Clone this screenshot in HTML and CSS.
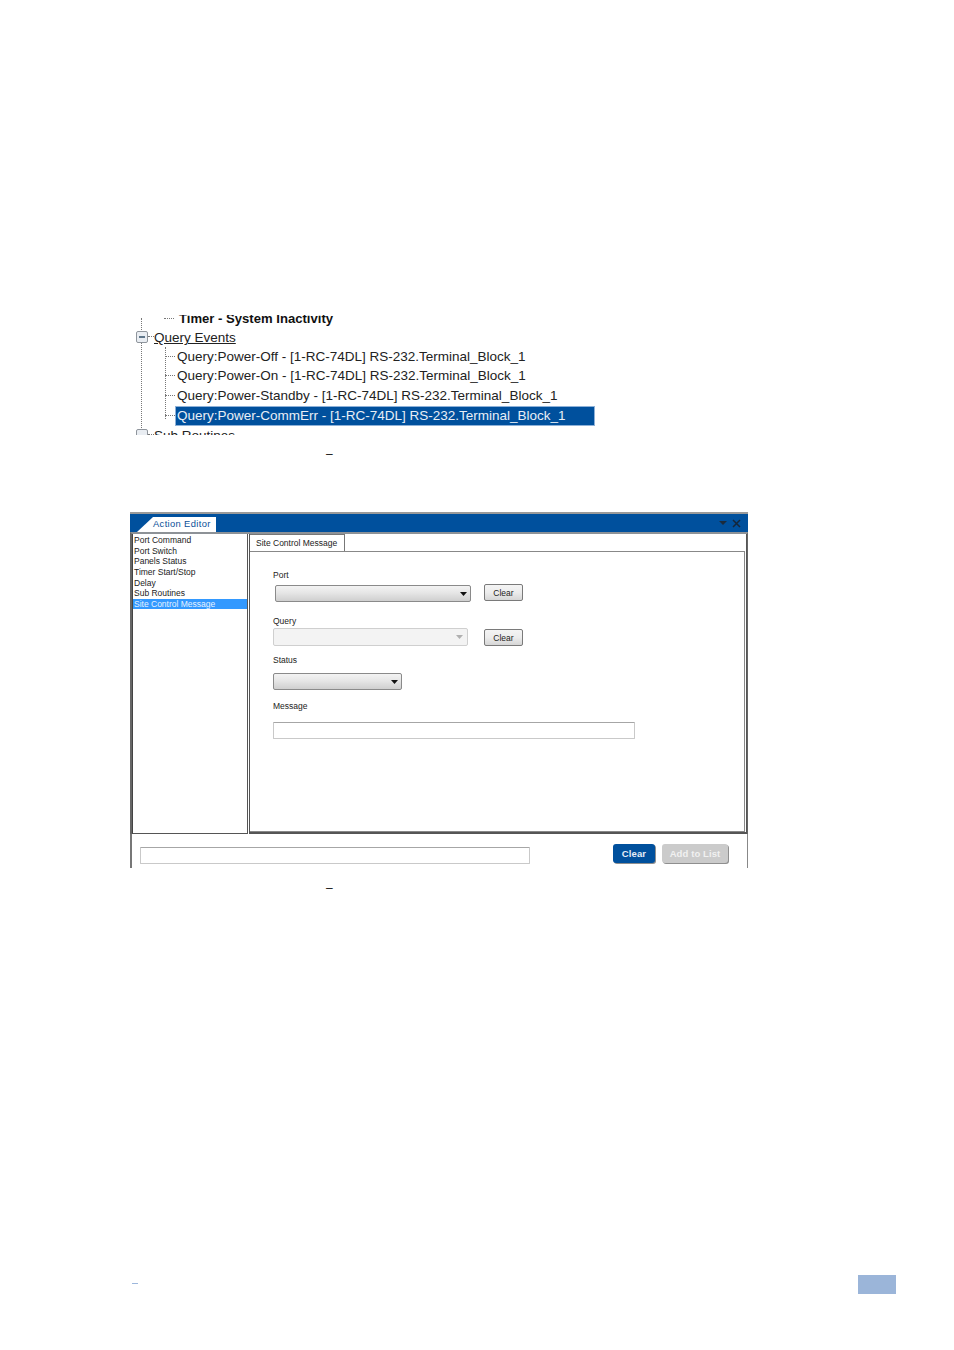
FILE: index.html
```html
<!DOCTYPE html>
<html lang="en">
<head>
<meta charset="utf-8">
<title>Action Editor</title>
<link rel="stylesheet" href="styles.css">
</head>
<body>
<div class="page">
  <section class="tree">
    <div class="tree-clip">
      <div class="root-line"></div>
      <div class="row row-timer"><span class="stub"></span><span class="timer">Timer - System Inactivity</span></div>
      <div class="row row-group">
        <svg class="expander" width="12" height="12" viewBox="0 0 12 12"><rect x="0.5" y="0.5" width="11" height="11" rx="1.5" fill="#e9edf2" stroke="#8f959c"/><path d="M3 6h6" stroke="#26445f" stroke-width="1.4"/></svg>
        <span class="stub-short"></span>
        <span class="group">Query Events</span>
      </div>
      <div class="children">
        <div class="row"><span class="stub"></span><span class="item">Query:Power-Off - [1-RC-74DL] RS-232.Terminal_Block_1</span></div>
        <div class="row"><span class="stub"></span><span class="item">Query:Power-On - [1-RC-74DL] RS-232.Terminal_Block_1</span></div>
        <div class="row"><span class="stub"></span><span class="item">Query:Power-Standby - [1-RC-74DL] RS-232.Terminal_Block_1</span></div>
        <div class="row"><span class="stub"></span><span class="item selected">Query:Power-CommErr - [1-RC-74DL] RS-232.Terminal_Block_1</span></div>
      </div>
      <div class="row row-sub">
        <svg class="expander" width="12" height="12" viewBox="0 0 12 12"><rect x="0.5" y="0.5" width="11" height="11" rx="1.5" fill="#e9edf2" stroke="#8f959c"/></svg>
        <span class="stub-short"></span>
        <span class="sub">Sub Routines</span>
      </div>
    </div>
  </section>

  <div class="caption caption-one">–</div>

  <section class="window">
    <header class="titlebar">
      <div class="title-tab">Action Editor</div>
      <div class="title-tools">
        <svg width="8" height="4" viewBox="0 0 8 4"><path d="M0 0h8L4 4z" fill="#1b2b3d"/></svg>
        <svg width="9" height="9" viewBox="0 0 9 9"><path d="M1 1l7 7M8 1L1 8" stroke="#15263a" stroke-width="1.5" fill="none"/></svg>
      </div>
    </header>
    <div class="main">
      <ul class="action-list">
        <li>Port Command</li>
        <li>Port Switch</li>
        <li>Panels Status</li>
        <li>Timer Start/Stop</li>
        <li>Delay</li>
        <li>Sub Routines</li>
        <li class="active">Site Control Message</li>
      </ul>
      <div class="tab-panel">
        <div class="tab-strip"><div class="tab">Site Control Message</div></div>
        <div class="tab-body">
          <div class="label label-port">Port</div>
          <div class="control-row row-port">
            <div class="select select-port"><svg width="7" height="4" viewBox="0 0 7 4"><path d="M0 0h7L3.5 4z" fill="#111"/></svg></div>
            <button class="btn btn-port">Clear</button>
          </div>
          <div class="label label-query">Query</div>
          <div class="control-row row-query">
            <div class="select select-query"><svg width="7" height="4" viewBox="0 0 7 4"><path d="M0 0h7L3.5 4z" fill="#b0b0b0"/></svg></div>
            <button class="btn btn-query">Clear</button>
          </div>
          <div class="label label-status">Status</div>
          <div class="select select-status"><svg width="7" height="4" viewBox="0 0 7 4"><path d="M0 0h7L3.5 4z" fill="#111"/></svg></div>
          <div class="label label-message">Message</div>
          <div class="input input-message"></div>
        </div>
      </div>
    </div>
    <footer class="win-footer">
      <div class="input input-bottom"></div>
      <button class="action action-clear">Clear</button>
      <button class="action action-add">Add to List</button>
    </footer>
  </section>

  <div class="caption caption-two">–</div>

  <footer class="page-foot">
    <span class="foot-mark"></span>
    <span class="page-block"></span>
  </footer>
</div>
</body>
</html>
```

FILE: styles.css
```css
* { box-sizing: border-box; }
html, body { margin: 0; padding: 0; background: #fff; }
body { font-family: "Liberation Sans", Arial, sans-serif; }
.page { width: 954px; height: 1350px; padding-top: 315px; overflow: hidden; }

/* tree */
.tree { margin-left: 130px; width: 470px; }
.tree-clip { position: relative; height: 120px; overflow: hidden; }
.root-line { position: absolute; left: 11px; top: 3px; bottom: 3px; border-left: 1px dotted #777; }
.row { display: flex; align-items: center; height: 19.6px; font-size: 13.5px; color: #222; white-space: nowrap; }
.row-timer { height: 12px; padding-left: 34px; align-items: flex-start; }
.row-timer .stub { margin-right: 4px; margin-top: 3px; }
.timer { font-weight: 700; color: #111; font-size: 13.1px; line-height: 12px; margin-top: -2px; margin-left: 1px; }
.row-group { padding-left: 6px; }
.expander { flex: none; position: relative; }
.stub-short { width: 6px; border-top: 1px dotted #777; }
.group { text-decoration: underline; color: #222; position: relative; top: 1px; }
.children { position: relative; margin-left: 35px; padding-right: 5px; height: 78.4px; }
.children::before { content: ""; position: absolute; left: 0; top: 0; height: 72px; border-left: 1px dotted #777; }
.stub { width: 10px; flex: none; border-top: 1px dotted #777; }
.item { padding: 0 2px 0 2px; }
.selected { flex: 1; align-self: flex-start; height: 20px; margin-top: 1px; padding-bottom: 2px; display: flex; align-items: center; background: #00509d; color: #e8eef6; outline: 1px solid #8eb1d8; outline-offset: -1px; }
.row-sub { padding-left: 6px; }
.sub { color: #222; position: relative; top: 1px; }

.caption { margin-left: 326px; font-size: 12px; line-height: 10px; height: 10px; color: #111; }
.caption-one { margin-top: 14px; }
.caption-two { margin-top: 15px; }

/* window */
.window { margin-left: 130px; margin-top: 53px; width: 618px; height: 356px; border-top: 2px solid #9a9a9a; display: flex; flex-direction: column; font-size: 8.5px; color: #222; }
.titlebar { height: 18px; flex: none; background: #00509d; display: flex; align-items: flex-end; justify-content: space-between; padding: 0 7px 0 7px; }
.title-tab { width: 79px; height: 15px; background: #fff; color: #0a4f98; font-size: 9.4px; letter-spacing: 0.35px; line-height: 13px; padding-left: 16px; clip-path: polygon(0 100%, 16px 0, 100% 0, 100% 100%); }
.title-tools { display: flex; align-items: center; gap: 5px; height: 18px; }
.main { height: 302px; display: flex; border-top: 2px solid #8d9297; border-left: 2px solid #666; border-right: 1px solid #666; flex: none; }
.action-list { list-style: none; margin: 0; padding: 1px 0 0 0; width: 116px; flex: none; border-right: 1px solid #555; border-bottom: 1px solid #555; border-left: 1px solid #444; }
.action-list li { height: 10.7px; line-height: 11px; padding-left: 1px; white-space: nowrap; font-size: 8.5px; color: #222; }
.action-list .active { background: #3399ff; color: #e6f2ff; height: 10px; line-height: 10px; }
.tab-panel { flex: 1; margin-left: 1px; border: 1px solid #555; border-top: 0; border-bottom-width: 2px; display: flex; flex-direction: column; }
.tab-strip { height: 18px; flex: none; display: flex; }
.tab { width: 95px; height: 18px; background: #fff; border-right: 1px solid #777; border-top: 1px solid #777; padding-left: 6px; line-height: 17px; white-space: nowrap; font-size: 8.5px; }
.tab-body { flex: 1; margin: -1px 1px 0 0; border-top: 1px solid #888; border-right: 1px solid #888; border-bottom: 1px solid #888; padding-left: 23px; display: flex; flex-direction: column; align-items: flex-start; }
.label { height: 11px; line-height: 11px; white-space: nowrap; font-size: 8.5px; }
.label-port { margin-top: 18px; }
.label-query { margin-top: 14px; }
.label-status { margin-top: 9px; }
.label-message { margin-top: 11px; }
.control-row { display: flex; }
.row-port { margin-top: 4px; margin-left: 2px; }
.row-query { margin-top: 1px; }
.select { height: 17px; border: 1px solid #8a8a8a; border-radius: 2px; background: linear-gradient(#f3f3f3, #e6e6e6 45%, #cfcfcf); display: flex; align-items: center; justify-content: flex-end; padding-right: 3px; }
.select-port { width: 196px; }
.select-query { width: 195px; height: 18px; background: #f3f3f3; border-color: #cfcfcf; padding-right: 4px; }
.select-status { width: 129px; margin-top: 7px; }
.btn { width: 39px; height: 17px; margin-left: 13px; margin-top: -1px; padding: 0; border: 1px solid #7a7a7a; border-radius: 2px; background: linear-gradient(#f4f4f4, #ececec 50%, #d6d6d6); font: 8.5px "Liberation Sans", Arial, sans-serif; color: #222; }
.btn-query { margin-left: 16px; margin-top: 1px; }
.input { border: 1px solid #c9c9c9; border-top-color: #a6a6a6; border-radius: 1px; height: 17px; background: #fff; }
.input-message { width: 362px; margin-top: 10px; }
.win-footer { flex: 1; display: flex; align-items: flex-start; border-left: 2px solid #777; border-right: 1px solid #888; padding-left: 8px; }
.input-bottom { width: 390px; margin-top: 13px; }
.action { height: 19px; margin-top: 10px; padding: 0; border: 0; border-radius: 3px; font: 700 9.5px "Liberation Sans", Arial, sans-serif; letter-spacing: 0.1px; box-shadow: 1px 1px 0 #8f8f8f; }
.action-clear { width: 42px; margin-left: 83px; background: #00509d; color: #e6eef8; }
.action-add { width: 66px; margin-left: 7px; background: #cbcbcb; color: #f1f1f1; }

/* page footer */
.page-foot { margin-top: 382px; height: 19px; padding-left: 132px; display: flex; align-items: flex-start; justify-content: space-between; padding-right: 58px; }
.foot-mark { width: 6px; height: 1px; background: #9db7dc; margin-top: 8px; }
.page-block { width: 38px; height: 19px; background: #9bb5d9; }
```
